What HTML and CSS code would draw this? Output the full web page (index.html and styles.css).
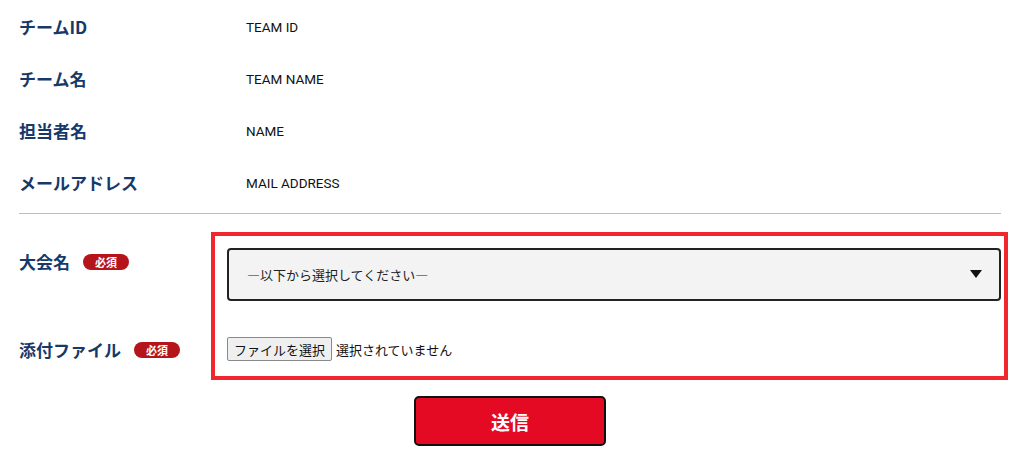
FILE: index.html
```html
<!DOCTYPE html>
<html lang="ja">
<head>
<meta charset="utf-8">
<title>Entry</title>
<link rel="stylesheet" href="styles.css">
</head>
<body>
<div class="wrap">
  <div class="info">
    <div class="info-row"><div class="info-label">チームID</div><div class="info-value">TEAM ID</div></div>
    <div class="info-row"><div class="info-label">チーム名</div><div class="info-value">TEAM NAME</div></div>
    <div class="info-row"><div class="info-label">担当者名</div><div class="info-value">NAME</div></div>
    <div class="info-row"><div class="info-label">メールアドレス</div><div class="info-value">MAIL ADDRESS</div></div>
  </div>
  <div class="divider"></div>
  <form class="entry-form">
    <div class="form-area">
      <div class="form-labels">
        <div class="field-label first"><span class="label-text">大会名</span><span class="badge">必須</span></div>
        <div class="field-label second"><span class="label-text">添付ファイル</span><span class="badge">必須</span></div>
      </div>
      <div class="red-box">
        <div class="select-wrap">
          <select class="select">
            <option>—以下から選択してください—</option>
          </select>
        </div>
        <div class="file-row">
          <button type="button" class="file-btn">ファイルを選択</button>
          <span class="file-status">選択されていません</span>
        </div>
      </div>
    </div>
    <div class="submit-row">
      <button type="button" class="submit">送信</button>
    </div>
  </form>
</div>
</body>
</html>
```

FILE: styles.css
```css
* { box-sizing: border-box; }
html, body { margin: 0; padding: 0; background: #fff; }
body {
  font-family: "Noto Sans CJK JP", "Noto Sans", sans-serif;
  color: #111;
}
.wrap {
  width: 1020px;
  padding: 1px 19px 0 19px;
}
.info-row {
  display: flex;
  align-items: center;
  height: 52px;
}
.info-label {
  width: 227px;
  flex-shrink: 0;
  font-size: 17px;
  font-weight: 700;
  color: #17396a;
  line-height: 24px;
}
.info-value {
  font-family: Roboto, "Noto Sans CJK JP", sans-serif;
  font-size: 13.5px;
  color: #111;
  line-height: 18px;
}
.divider {
  margin-top: 4px;
  height: 1px;
  background: #bdbdbd;
}
.entry-form { margin: 18px 0 0 0; }
.form-area { display: flex; }
.form-labels {
  width: 192px;
  flex-shrink: 0;
  display: flex;
  flex-direction: column;
}
.field-label {
  display: flex;
  align-items: center;
  height: 24px;
  gap: 13px;
}
.field-label.first { margin-top: 18px; }
.field-label.second { margin-top: 64px; }
.label-text {
  font-size: 17px;
  font-weight: 700;
  color: #17396a;
  line-height: 24px;
}
.badge {
  display: inline-flex;
  align-items: center;
  justify-content: center;
  width: 46px;
  height: 16px;
  border-radius: 8px;
  background: #b5141b;
  color: #fff;
  font-size: 11px;
  font-weight: 700;
  line-height: 16px;
}
.red-box {
  width: 797px;
  flex-shrink: 0;
  border: 4px solid #f0282e;
  padding: 12px 3px 15px 12px;
}
.select-wrap { position: relative; }
.select-wrap::after {
  content: "";
  position: absolute;
  right: 19px;
  top: 22px;
  width: 0;
  height: 0;
  border-left: 6px solid transparent;
  border-right: 6px solid transparent;
  border-top: 8px solid #111;
  pointer-events: none;
}
.select {
  -webkit-appearance: none;
  appearance: none;
  display: block;
  width: 100%;
  height: 53px;
  border: 2px solid #222;
  border-radius: 4px;
  background: #f3f3f3;
  padding: 0 40px 0 18px;
  font-family: "Noto Sans CJK JP", sans-serif;
  font-size: 13px;
  color: #222;
  outline: none;
}
.file-row {
  margin-top: 36px;
  display: flex;
  align-items: center;
  height: 24px;
  gap: 4px;
}
.file-btn {
  height: 24px;
  width: 105px;
  padding: 0;
  border: 1px solid #8a8a8a;
  border-radius: 2px;
  background: #efefef;
  font-family: "Noto Sans CJK JP", sans-serif;
  font-size: 13px;
  color: #111;
}
.file-status {
  font-size: 13px;
  color: #111;
}
.submit-row {
  display: flex;
  justify-content: center;
  margin-top: 16px;
}
.submit {
  width: 192px;
  height: 50px;
  border: 2px solid #111;
  border-radius: 5px;
  background: #e50a24;
  color: #fff;
  font-family: "Noto Sans CJK JP", sans-serif;
  font-size: 19px;
  font-weight: 700;
}
```
